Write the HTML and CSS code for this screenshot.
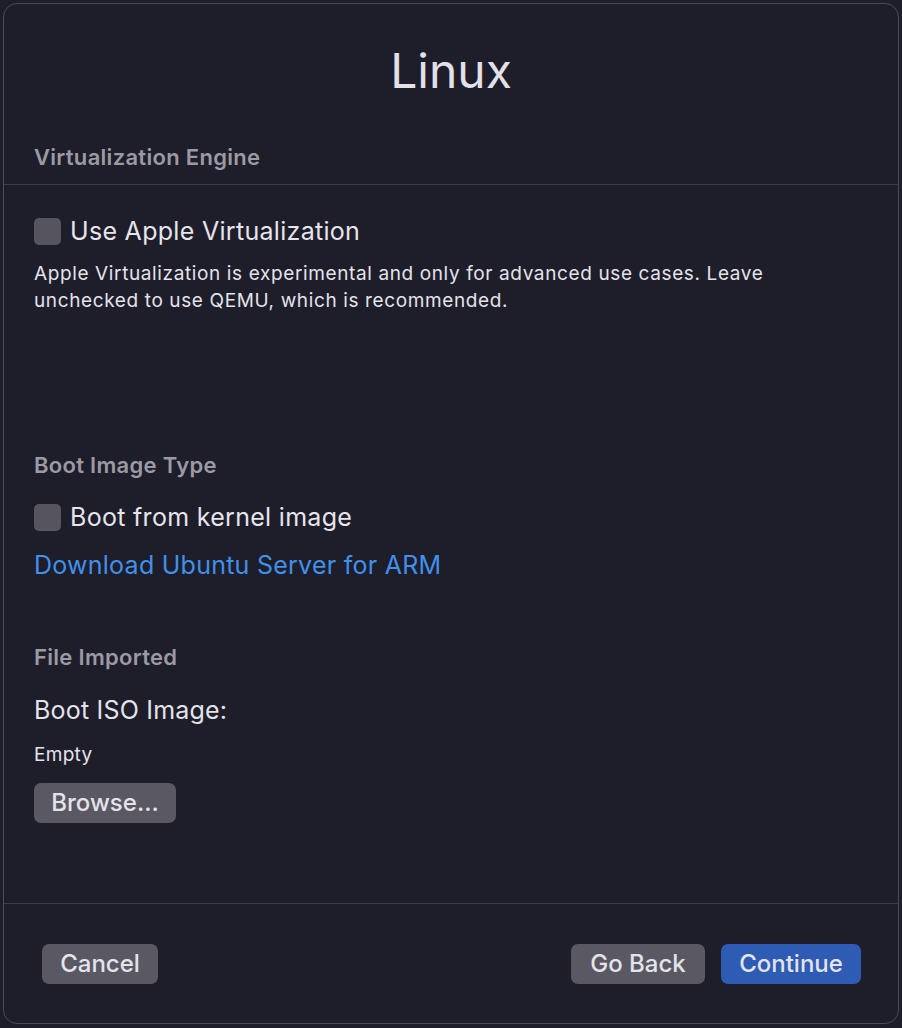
FILE: index.html
```html
<!DOCTYPE html>
<html>
<head>
<meta charset="utf-8">
<link rel="stylesheet" href="styles.css">
</head>
<body>
<div class="window">
  <h1 class="title">Linux</h1>
  <div class="section-head first">Virtualization Engine</div>
  <div class="divider"></div>
  <div class="content">
    <label class="check"><span class="box"></span><span>Use Apple Virtualization</span></label>
    <p class="desc">Apple Virtualization is experimental and only for advanced use cases. Leave unchecked to use QEMU, which is recommended.</p>
    <div class="section-head boot">Boot Image Type</div>
    <label class="check"><span class="box"></span><span>Boot from kernel image</span></label>
    <a class="link">Download Ubuntu Server for ARM</a>
    <div class="section-head file">File Imported</div>
    <div class="field-label">Boot ISO Image:</div>
    <div class="empty">Empty</div>
    <button class="btn browse">Browse...</button>
  </div>
  <div class="divider footer-line"></div>
  <div class="footer">
    <button class="btn">Cancel</button>
    <div class="right">
      <button class="btn">Go Back</button>
      <button class="btn primary">Continue</button>
    </div>
  </div>
</div>
</body>
</html>
```
FILE: styles.css
```css
html, body {
  margin: 0;
  padding: 0;
  background: #1e1d2a;
}
body {
  padding: 3px;
  font-family: Inter, "Noto Sans", sans-serif;
  color: #e4e3ea;
}
.window {
  box-sizing: border-box;
  width: 896px;
  height: 1021px;
  border: 1px solid #4b4a56;
  border-radius: 14px;
  background: #1e1d2a;
  display: flex;
  flex-direction: column;
}
.title {
  margin: 36px 0 0;
  text-align: center;
  font-weight: 400;
  font-size: 48px;
  line-height: 62px;
  color: #e2e1e8;
}
.section-head {
  font-size: 22px;
  font-weight: 600;
  letter-spacing: 0.3px;
  color: #9b9aa4;
  line-height: 24px;
  padding-left: 30px;
}
.section-head.first {
  margin-top: 43px;
}
.divider {
  height: 1px;
  background: #3c3b47;
  margin-top: 15px;
}
.content {
  padding-left: 30px;
  display: flex;
  flex-direction: column;
  align-items: flex-start;
}
.content .section-head { padding-left: 0; }
.check {
  display: flex;
  align-items: center;
  gap: 9px;
  font-size: 25px;
  letter-spacing: 0.3px;
  line-height: 30px;
  color: #e6e5ec;
  margin-top: 31px;
}
.box {
  width: 27px;
  height: 27px;
  border-radius: 5px;
  background: #56555f;
}
.desc {
  margin: 14px 0 0;
  font-size: 19px;
  letter-spacing: 0.62px;
  line-height: 27px;
  width: 790px;
  color: #e4e3ea;
}
.section-head.boot { margin-top: 139px; }
.section-head.boot + .check { margin-top: 25px; }
.link {
  margin-top: 18px;
  font-size: 25px;
  letter-spacing: 0.25px;
  line-height: 30px;
  color: #4190ea;
}
.section-head.file { margin-top: 65px; }
.field-label {
  margin-top: 26px;
  font-size: 25px;
  letter-spacing: 0.2px;
  line-height: 30px;
}
.empty {
  margin-top: 18px;
  font-size: 19px;
  letter-spacing: 0.3px;
  line-height: 24px;
}
.btn {
  font-family: Inter, "Noto Sans", sans-serif;
  font-size: 24px;
  font-weight: 500;
  line-height: 30px;
  color: #e4e3ea;
  background: #5a5963;
  border: none;
  border-radius: 7px;
  height: 40px;
  padding: 0 10px;
}
.browse {
  margin-top: 16px;
  height: 40px;
  width: 142px;
}
.footer-line {
  margin-top: auto;
  margin-bottom: 0;
}
.footer {
  display: flex;
  justify-content: space-between;
  padding: 40px 37px 39px 38px;
}
.footer .btn { width: 116px; }
.right { display: flex; gap: 16px; }
.right .btn { width: 134px; }
.right .btn.primary { width: 140px; background: #2e5bb4; }
```
